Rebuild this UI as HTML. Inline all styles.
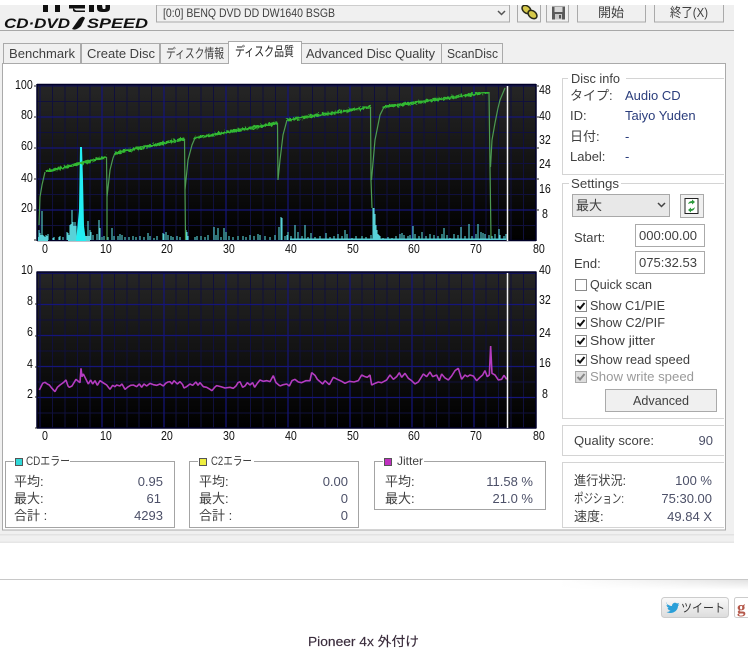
<!DOCTYPE html>
<html><head><meta charset="utf-8"><title>CD-DVD Speed</title>
<style>
html,body{margin:0;padding:0;background:#fff}
svg{display:block}
text{font-family:"Liberation Sans","Noto Sans CJK JP",sans-serif;font-size:13px;fill:#404040}
.v{fill:#2a3d7c}
.s{fill:#4c5068}
.m{font-size:13px;fill:#111;transform-box:fill-box;transform-origin:0 0;transform:scaleX(.82)}
.e{text-anchor:end}
.g{fill:none;stroke:#d4d4d4}
.b{fill:#f0f0f0;stroke:#aaa}
</style></head><body>
<svg width="748" height="662" viewBox="0 0 748 662" xmlns="http://www.w3.org/2000/svg">
<defs>
<linearGradient id="cg" x1="0" y1="0" x2="0" y2="1"><stop offset="0" stop-color="#262626"/><stop offset="1" stop-color="#000"/></linearGradient>
<linearGradient id="bt" x1="0" y1="0" x2="0" y2="1"><stop offset="0" stop-color="#fafafa"/><stop offset="1" stop-color="#dcdcdc"/></linearGradient>
<linearGradient id="sh" x1="0" y1="0" x2="1" y2="0"><stop offset="0" stop-color="#e6e6e6" stop-opacity="0"/><stop offset="1" stop-color="#e2e2e2"/></linearGradient>
<linearGradient id="wf" x1="0" y1="0" x2="0" y2="1"><stop offset="0" stop-color="#fff" stop-opacity="0"/><stop offset="1" stop-color="#fff"/></linearGradient>
<filter id="n" x="0" y="0" width="1" height="1" filterUnits="objectBoundingBox"><feTurbulence type="fractalNoise" baseFrequency=".45" numOctaves="2" seed="4"/><feDisplacementMap in="SourceGraphic" scale="5" xChannelSelector="R" yChannelSelector="G"/></filter>
<g id="grid">
<rect x="37" y="0" width="499" height="157" fill="url(#cg)"/>
<path fill="none" stroke="#10103c" d="M52.5 0V157M65 0V157M77.5 0V157M90 0V157M114.5 0V157M127 0V157M139 0V157M151.5 0V157M176 0V157M188.5 0V157M201 0V157M213.5 0V157M238 0V157M250.5 0V157M263 0V157M275.5 0V157M300 0V157M312.5 0V157M325 0V157M337.5 0V157M362 0V157M374.5 0V157M387 0V157M399.5 0V157M424 0V157M436.5 0V157M449 0V157M461.5 0V157M486 0V157M498.5 0V157M511 0V157M523.5 0V157M37 17.5H536M37 48.5H536M37 79.5H536M37 110.5H536M37 141.5H536"/>
<path fill="none" stroke="#15157a" stroke-width="1.200" d="M102 0V157M164 0V157M226 0V157M288 0V157M350 0V157M412 0V157M474 0V157M37 33H536M37 64H536M37 95H536M37 126H536"/>
<path fill="none" stroke="#10105a" d="M40 0V157M37 2H536"/>
<path fill="none" stroke="#000028" stroke-width="1.500" d="M37 .5H536M37 156.5H536M37 0V157M536 0V157"/>
</g>
<g id="ck"><rect x=".5" y=".5" width="11" height="11" fill="#fff" stroke="#8a8a8a"/><path d="M2.5 6L5 8.5L9.5 3" fill="none" stroke="#111" stroke-width="2"/></g>
</defs>

<rect x="0" y="5" width="734" height="538" fill="#f0f0f0"/>
<rect x="0" y="534" width="734" height="1.5" fill="#e2e2e2"/>
<rect x="0" y="541.5" width="734" height="1.5" fill="#e6e6e6"/>
<path d="M0 30.5H734" stroke="#a8a8a8"/>

<!-- logo -->
<path fill="#111" d="M43 5h5v7h-5zM55 5h5v7h-5zM69 5h16v3.500H69zM69 5h4v5q0 2 3 2h9v-1.500H76zM89 5h5v7h-5zM97 5h13v3q0 4-5 4h-3q-5 0-5-4z"/>
<path fill="#f0f0f0" d="M102 5h3.500v3q0 1-1.500 1t-1.500-1z"/>
<text x="4" y="28" textLength="66" lengthAdjust="spacingAndGlyphs" style="font-size:14px;font-weight:bold;font-style:italic;fill:#111">CD·DVD</text>
<path d="M72 29L79 19Q83 15 85 18L81 26Q76 31 72 29Z" fill="#111"/>
<text x="87" y="28" textLength="61" lengthAdjust="spacingAndGlyphs" style="font-size:14px;font-weight:bold;font-style:italic;fill:#111">SPEED</text>

<!-- drive select + toolbar -->
<rect class="b" x="156.500" y="5" width="353" height="17"/>
<text x="163" y="17" textLength="172" lengthAdjust="spacingAndGlyphs" style="font-size:12px">[0:0]    BENQ DVD DD DW1640 BSGB</text>
<path d="M498 11l3.500 3.500L505 11" fill="none" stroke="#555" stroke-width="1.500"/>
<rect class="b" x="517.500" y="4" width="23" height="18"/>
<ellipse cx="526.500" cy="9.500" rx="5" ry="3.500" transform="rotate(40 526.500 9.500)" fill="#d6c94a" stroke="#2a2a18" stroke-width="1.500"/>
<ellipse cx="532.500" cy="14.500" rx="5" ry="3.500" transform="rotate(40 532.500 14.500)" fill="#d6c94a" stroke="#2a2a18" stroke-width="1.500"/>
<rect class="b" x="546.500" y="4" width="22" height="18"/>
<rect x="552" y="6.500" width="13" height="13" fill="#5a5a5a"/><rect x="554.500" y="7" width="8" height="5" fill="#d8d8d8"/><rect x="555" y="14" width="7" height="5.500" fill="#c8c8c8"/><rect x="559" y="15" width="2" height="3.500" fill="#555"/>
<rect class="b" x="577.500" y="4" width="68" height="18"/>
<text x="598" y="17" textLength="26" lengthAdjust="spacingAndGlyphs">開始</text>
<rect class="b" x="654.500" y="4" width="69" height="18"/>
<text x="670" y="17" textLength="38" lengthAdjust="spacingAndGlyphs">終了(X)</text>
<rect x="0" y="0" width="748" height="5" fill="#fff"/>

<!-- tabs -->
<rect class="b" x="3.500" y="43.500" width="77" height="20"/>
<rect class="b" x="81.500" y="43.500" width="78" height="20"/>
<rect class="b" x="160.500" y="43.500" width="68" height="20"/>
<rect class="b" x="301.500" y="43.500" width="140" height="20"/>
<rect class="b" x="441.500" y="43.500" width="61" height="20"/>
<rect x="2.500" y="63.500" width="723" height="466.500" fill="#fff" stroke="#aaa"/>
<path d="M228.500 64V41.500H301.500V64" fill="#fff" stroke="#aaa"/>
<rect x="229" y="60" width="72" height="5" fill="#fff"/>
<text x="9" y="58" textLength="66" lengthAdjust="spacingAndGlyphs">Benchmark</text>
<text x="87" y="58" textLength="68" lengthAdjust="spacingAndGlyphs">Create Disc</text>
<text x="166" y="58" textLength="58" lengthAdjust="spacingAndGlyphs">ディスク情報</text>
<text x="235" y="56" textLength="59" lengthAdjust="spacingAndGlyphs" style="fill:#222">ディスク品質</text>
<text x="306" y="58" textLength="129" lengthAdjust="spacingAndGlyphs">Advanced Disc Quality</text>
<text x="447" y="58" textLength="51" lengthAdjust="spacingAndGlyphs">ScanDisc</text>

<!-- chart 1 -->
<use href="#grid" x="0" y="84"/>
<text class="m" x="15" y="89">100</text><text class="m" x="21" y="119">80</text><text class="m" x="21" y="150">60</text><text class="m" x="21" y="182">40</text><text class="m" x="21" y="212">20</text>
<text class="m" x="539" y="94">48</text><text class="m" x="539" y="120">40</text><text class="m" x="539" y="144">32</text><text class="m" x="539" y="168">24</text><text class="m" x="539" y="193">16</text><text class="m" x="542" y="218">8</text>
<text class="m" x="42" y="253">0</text><text class="m" x="100" y="253">10</text><text class="m" x="161" y="253">20</text><text class="m" x="223" y="253">30</text><text class="m" x="285" y="253">40</text><text class="m" x="347" y="253">50</text><text class="m" x="408" y="253">60</text><text class="m" x="470" y="253">70</text><text class="m" x="533" y="253">80</text>
<path d="M34 86h2M34 117h2M34 148h2M34 179h2M34 210h2M34 240h2M537 86h2M537 117h2M537 148h2M537 179h2M537 210h2" stroke="#222"/>
<!-- errors -->
<path fill="none" stroke="#58d2d8" stroke-width="1.100" d="M39 240V230M40 240V233M41 240V235M42 240V211M43 240V235M44 240V236M46 240V235M47 240V236M48 240V234M53 240V238M54 240V237M59 240V237M60 240V236M63 240V237M67 240V232M68 240V233M69 240V235M70 240V225M71 240V224M72 240V210M73 240V222M74 240V226M75 240V222M76 240V226M88 240V221M90 240V230M91 240V232M93 240V235M97 240V234M99 240V220M100 240V228M102 240V237M104 240V236M108 240V237M112 240V228M114 240V236M118 240V236M120 240V234M122 240V235M125 240V237M129 240V237M133 240V236M136 240V237M140 240V236M144 240V237M148 240V233M150 240V236M154 240V238M157 240V236M163 240V233M164 240V234M166 240V232M168 240V235M171 240V236M173 240V237M177 240V236M180 240V237M186 240V230M187 240V232M188 240V236M195 240V237M197 240V236M201 240V236M205 240V237M208 240V235M214 240V227M216 240V235M218 240V228M221 240V237M224 240V228M226 240V232M229 240V236M233 240V237M238 240V236M243 240V236M246 240V237M250 240V235M254 240V236M258 240V234M260 240V235M265 240V236M270 240V237M275 240V235M279 240V227M281 240V217M282 240V218M285 240V236M287 240V235M288 240V232M291 240V236M295 240V225M298 240V232M302 240V236M305 240V225M308 240V237M311 240V233M315 240V237M320 240V236M326 240V233M330 240V237M334 240V236M338 240V234M342 240V236M345 240V230M347 240V234M352 240V238M356 240V236M362 240V236M366 240V237M371 240V235M373 240V208M374 240V208M375 240V214M376 240V225M377 240V230M378 240V234M379 240V235M380 240V236M383 240V238M388 240V237M392 240V238M396 240V236M400 240V234M402 240V233M404 240V235M408 240V236M410 240V235M413 240V226M415 240V234M419 240V236M422 240V232M426 240V236M430 240V234M434 240V235M438 240V236M442 240V234M444 240V228M447 240V235M450 240V238M454 240V234M458 240V235M461 240V227M465 240V236M469 240V224M472 240V236M476 240V234M478 240V224M481 240V232M485 240V234M489 240V235M492 240V236M495 240V234M499 240V229M483 240V233M500 240V235M504 240V236M506 240V234"/>
<path d="M290 240V238.500H506V240Z" fill="#58d2d8"/>
<path d="M38 241V237H48V241ZM68 241V236H90V241Z" fill="#58d2d8"/>
<path d="M76 241L77.500 226L79 210L80 147L82 147L83 180L84 226L86 241Z" fill="#22eef2"/>
<!-- speed curves -->
<path fill="none" stroke="#4c9b52" stroke-width="1.200" d="M39 225L40 197L42 185L45 172M106.500 157L107 197L107 240M107 197L110 170L113 158L115 153M184.500 139L185 190L185.500 240M185 190L188 160L192 145L195 138M277.500 123L278 180M278 180L280 160L283 135L287 120M370.500 107L371 180L372 208M371.500 180L375 140L377 130L380 115L384 107M489 92L490 167L491 238M490.500 167L492 140L495 123L498 108L500 100L505 88"/>
<g filter="url(#n)"><path fill="none" stroke="#30b830" stroke-width="2.800" d="M45 172L106.500 157M115 153L184.500 139M195 138L277.500 123M287 120L370.500 107M384 107L489 92"/></g>
<path d="M507.500 86V241" stroke="#f4f4f4" stroke-width="1.500"/>

<!-- chart 2 -->
<use href="#grid" x="0" y="271.500"/>
<text class="m" x="21" y="274">10</text><text class="m" x="27" y="305">8</text><text class="m" x="27" y="336">6</text><text class="m" x="27" y="368">4</text><text class="m" x="27" y="398">2</text>
<text class="m" x="539" y="274">40</text><text class="m" x="539" y="304">32</text><text class="m" x="539" y="337">24</text><text class="m" x="539" y="367">16</text><text class="m" x="542" y="398">8</text>
<text class="m" x="42" y="440">0</text><text class="m" x="100" y="440">10</text><text class="m" x="161" y="440">20</text><text class="m" x="223" y="440">30</text><text class="m" x="285" y="440">40</text><text class="m" x="347" y="440">50</text><text class="m" x="408" y="440">60</text><text class="m" x="470" y="440">70</text><text class="m" x="533" y="440">80</text>
<path d="M35 304h2M35 336h2M35 367h2M35 397h2M35 428h2" stroke="#222"/>
<g fill="none" stroke="#b53cc0">
<polyline transform="translate(0,260) scale(.3333)" stroke-width="4.800" stroke-linejoin="bevel" points="118,390 124,378 128,370 135,367 142,372 148,375 156,385 165,395 172,382 180,375 190,368 198,360 204,378 208,382 216,378 228,358 236,365 240,368 243,325 246,350 250,342 255,352 265,372 272,360 278,372 285,362 292,376 300,362 312,370 320,375 330,388 338,376 345,380 350,375 360,378 366,372 375,388 385,380 392,376 400,375 410,380 418,372 425,382 432,372 440,378 450,370 460,374 470,376 480,372 490,378 497,370 504,366 510,365 516,372 522,362 532,372 540,365 548,374 552,384 560,380 570,372 578,376 588,366 594,376 600,368 610,380 620,382 630,388 636,392 644,382 650,377 662,380 675,384 690,382 700,385 708,378 714,368 720,365 728,382 735,378 742,368 750,375 758,368 764,382 772,370 780,360 790,364 800,362 810,365 820,347 828,368 840,378"/>
<polyline transform="translate(280,260) scale(.3333)" stroke-width="4.800" stroke-linejoin="bevel" points="0,378 10,374 20,372 28,378 36,362 45,358 55,366 65,368 78,362 90,362 95,338 105,346 112,358 120,365 128,372 135,362 148,374 160,352 172,358 185,364 195,370 208,364 222,366 235,362 245,345 255,350 262,352 270,345 275,375 285,370 295,366 305,368 320,360 330,345 340,358 350,350 358,338 365,352 375,340 385,355 395,362 405,372 415,366 430,342 440,350 450,336 458,350 470,345 478,362 485,342 495,354 505,360 515,348 525,332 535,325 545,358 555,345 562,350 570,345 580,348 590,362 600,352 608,345 615,332 622,350 628,345 632,258 636,340 645,345 655,360 665,358 672,346 680,358"/>
</g>
<path d="M507.500 273V428" stroke="#f4f4f4" stroke-width="1.500"/>

<!-- stat boxes -->
<rect x="5.500" y="461.500" width="169" height="66" fill="#fff" stroke="#a4a4a4"/>
<rect x="14" y="457" width="56" height="9" fill="#fff"/>
<rect x="15.500" y="458.500" width="7" height="7" fill="#30d8d8" stroke="#555"/>
<text x="26" y="465" textLength="44" lengthAdjust="spacingAndGlyphs" style="font-size:12px">CDエラー</text>
<text x="14" y="486">平均:</text><text x="14" y="503">最大:</text><text x="14" y="520">合計 :</text>
<text class="s e" x="163" y="486">0.95</text><text class="s e" x="161" y="503">61</text><text class="s e" x="163" y="520">4293</text>

<rect x="189.500" y="461.500" width="169" height="66" fill="#fff" stroke="#a4a4a4"/>
<rect x="198" y="457" width="56" height="9" fill="#fff"/>
<rect x="199.500" y="458.500" width="7" height="7" fill="#eeee40" stroke="#555"/>
<text x="211" y="465" textLength="41" lengthAdjust="spacingAndGlyphs" style="font-size:12px">C2エラー</text>
<text x="199" y="486">平均:</text><text x="199" y="503">最大:</text><text x="199" y="520">合計 :</text>
<text class="s e" x="348" y="486">0.00</text><text class="s e" x="348" y="503">0</text><text class="s e" x="348" y="520">0</text>

<rect x="374.500" y="461.500" width="171" height="48" fill="#fff" stroke="#a4a4a4"/>
<rect x="383" y="457" width="41" height="9" fill="#fff"/>
<rect x="384.500" y="458.500" width="7" height="7" fill="#c030c0" stroke="#555"/>
<text x="397" y="465" textLength="26" lengthAdjust="spacingAndGlyphs" style="font-size:12px">Jitter</text>
<text x="385" y="486">平均:</text><text x="385" y="503">最大:</text>
<text class="s e" x="533" y="486">11.58 %</text><text class="s e" x="533" y="503">21.0 %</text>

<!-- disc info -->
<path class="g" d="M724 78.500H562.500V174.500H724"/>
<rect x="568" y="72" width="58" height="12" fill="#fff"/>
<text x="571" y="83" textLength="49" lengthAdjust="spacingAndGlyphs">Disc info</text>
<text x="570" y="100">タイプ:</text><text x="570" y="120">ID:</text><text x="570" y="141">日付:</text><text x="570" y="161">Label:</text>
<text class="v" x="625" y="100">Audio CD</text><text class="v" x="625" y="120">Taiyo Yuden</text><text class="v" x="625" y="141">-</text><text class="v" x="625" y="161">-</text>

<!-- settings -->
<path class="g" d="M724 183.500H562.500V418.500H724"/>
<rect x="569" y="177" width="52" height="12" fill="#fff"/>
<text x="571" y="188" textLength="48" lengthAdjust="spacingAndGlyphs">Settings</text>
<rect x="572.500" y="194.500" width="97" height="22" fill="#e8e8e8" stroke="#a8a8a8"/>
<text x="576" y="210">最大</text>
<path d="M658 203l3.500 3.500L665 203" fill="none" stroke="#444" stroke-width="1.500"/>
<rect class="b" x="680.500" y="194.500" width="23" height="23"/>
<rect x="685" y="198.500" width="13" height="15" fill="#fff" stroke="#222"/>
<path d="M688 204q1-3 4-3v-1.500l3 2.500-3 2.500v-1.500q-2 0-4 1zM695 207q-1 4-4 4v1.500l-3-2.500 3-2.500v1.500q2 0 4-2z" fill="#2c9a3c"/>

<text x="574" y="242">Start:</text><text x="574" y="268">End:</text>
<rect x="635.500" y="224.500" width="69" height="22" fill="#fff" stroke="#aaa"/>
<rect x="635.500" y="251.500" width="69" height="22" fill="#fff" stroke="#aaa"/>
<text x="639" y="240" textLength="58" lengthAdjust="spacingAndGlyphs">000:00.00</text>
<text x="639" y="267" textLength="58" lengthAdjust="spacingAndGlyphs">075:32.53</text>

<rect x="575.500" y="279.500" width="11" height="11" fill="#fff" stroke="#8a8a8a"/>
<text x="590" y="289" textLength="62" lengthAdjust="spacingAndGlyphs">Quick scan</text>
<use href="#ck" x="575" y="300"/><text x="590" y="310" textLength="75" lengthAdjust="spacingAndGlyphs">Show C1/PIE</text>
<use href="#ck" x="575" y="317"/><text x="590" y="327" textLength="75" lengthAdjust="spacingAndGlyphs">Show C2/PIF</text>
<use href="#ck" x="575" y="335"/><text x="590" y="345" textLength="65" lengthAdjust="spacingAndGlyphs">Show jitter</text>
<use href="#ck" x="575" y="354"/><text x="590" y="364" textLength="100" lengthAdjust="spacingAndGlyphs">Show read speed</text>
<rect x="575.500" y="371.500" width="11" height="11" fill="#ddd" stroke="#aaa"/>
<path d="M577.500 377L580 379.500L584.500 374" fill="none" stroke="#888" stroke-width="2"/>
<text x="590" y="381" textLength="104" lengthAdjust="spacingAndGlyphs" style="fill:#9a9a9a">Show write speed</text>
<rect class="b" x="605.500" y="389.500" width="111" height="22"/>
<text x="633" y="405" textLength="56" lengthAdjust="spacingAndGlyphs">Advanced</text>

<!-- quality -->
<path class="g" d="M724 425.500H562.500V455.500H724"/>
<text x="574" y="445" textLength="80" lengthAdjust="spacingAndGlyphs">Quality score:</text>
<text class="s e" x="713" y="445">90</text>

<!-- progress -->
<path class="g" d="M724 462.500H562.500V527.500H724"/>
<text x="574" y="485" textLength="52" lengthAdjust="spacingAndGlyphs">進行状況:</text>
<text x="574" y="503" textLength="50" lengthAdjust="spacingAndGlyphs">ポジション:</text>
<text x="574" y="521">速度:</text>
<text class="s e" x="712" y="485">100 %</text><text class="s e" x="712" y="503">75:30.00</text><text class="s e" x="712" y="521">49.84 X</text>

<!-- page below -->
<path d="M0 579.500H748" stroke="#c8c8c8"/>
<rect x="560" y="580" width="188" height="10" fill="url(#sh)"/>
<rect x="560" y="580" width="188" height="10" fill="url(#wf)"/>
<rect x="661.500" y="597.500" width="67" height="20" rx="3" fill="url(#bt)" stroke="#ccc"/>
<path d="M666 603c2 2 4 3 6 3 0-3 3-4 5-2.500l2-.5-1 2 1.500-.5-1.500 1.500c0 5-6 9-11.500 6 2 0 3-.5 4-1.500-1.500 0-2.500-1-3-2.500h1.500c-1.500-.5-2.500-2-2.500-3l1.500.5c-1.500-1-1.500-2.500-1-3z" fill="#2b9fd8"/>
<text x="681" y="612" textLength="44" lengthAdjust="spacingAndGlyphs" style="font-size:12px;fill:#333">ツイート</text>
<rect x="734.500" y="597.500" width="20" height="20" rx="2" fill="#fff" stroke="#ccc"/>
<text x="737" y="613" style="font-family:'Liberation Serif',serif;font-size:17px;font-weight:bold;fill:#b5584a">g</text>
<text x="308" y="646" textLength="111" lengthAdjust="spacingAndGlyphs" style="font-size:13px;fill:#3a2c3c;stroke:#3a2c3c;stroke-width:.15">Pioneer 4x 外付け</text>
</svg>
</body></html>
